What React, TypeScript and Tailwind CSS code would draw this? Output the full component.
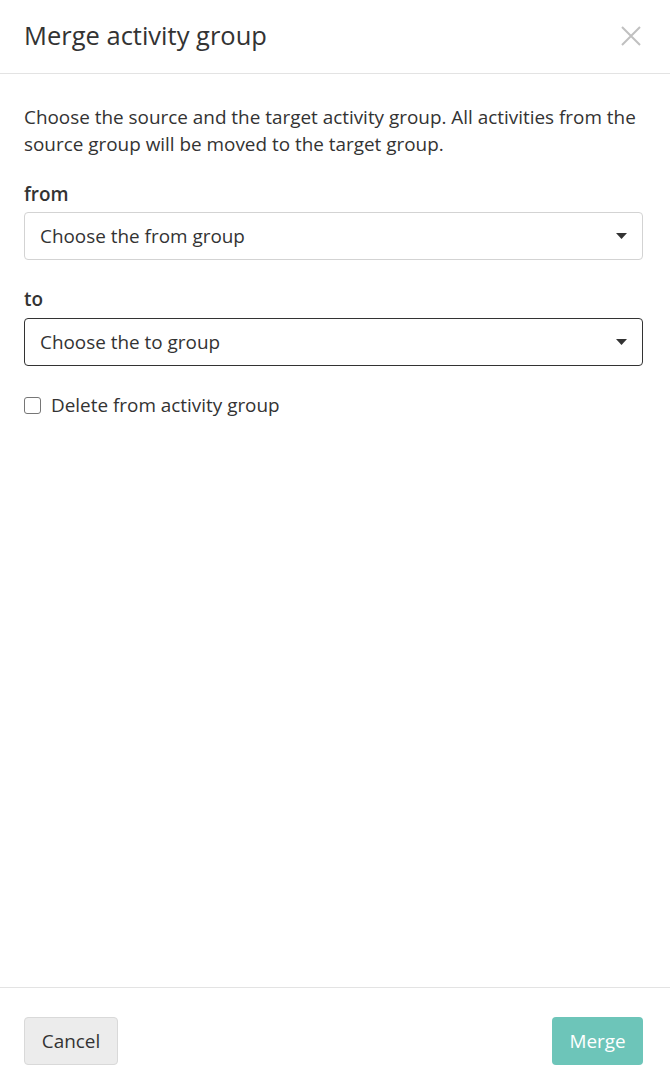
export default function App() {
  return (
    <div className="flex h-[1091px] w-full flex-col bg-white text-[#333] [font-family:'Open_Sans',sans-serif]">
      <header className="flex h-[74px] shrink-0 items-center justify-between border-b border-[#e3e3e3] pb-[2px] pl-6 pr-[29px]">
        <h1 className="text-[25.5px] leading-none">Merge activity group</h1>
        <button type="button" className="text-[#c0c0c0]" aria-label="Close">
          <svg width="20" height="20" viewBox="0 0 20 20" fill="none" stroke="currentColor" strokeWidth="2">
            <path d="M1 1l18 18M19 1L1 19" />
          </svg>
        </button>
      </header>

      <main className="flex-1 pl-6 pr-[27px] pt-[30px]">
        <p className="text-[18.9px] leading-[27px]">
          Choose the source and the target activity group. All activities from the source group will be moved to the target group.
        </p>

        <label className="mt-[23px] mb-[4px] block text-[18.9px] font-semibold leading-[27px]">from</label>
        <div className="flex h-12 items-center justify-between rounded border border-[#d3d3d3] pl-[15px] pr-[15px] text-[18.9px]">
          <span>Choose the from group</span>
          <svg width="11" height="6" viewBox="0 0 11 6" fill="#333">
            <path d="M0 0h11L5.5 6z" />
          </svg>
        </div>

        <label className="mt-[26px] mb-[5px] block text-[18.9px] font-semibold leading-[27px]">to</label>
        <div className="flex h-12 items-center justify-between rounded border border-[#333] pl-[15px] pr-[15px] text-[18.9px]">
          <span>Choose the to group</span>
          <svg width="11" height="6" viewBox="0 0 11 6" fill="#333">
            <path d="M0 0h11L5.5 6z" />
          </svg>
        </div>

        <label className="mt-[26px] flex items-center gap-[10px] text-[18.9px] leading-[27px]">
          <span className="h-[17px] w-[17px] rounded-[3px] border border-[#767676] bg-white" />
          <span>Delete from activity group</span>
        </label>
      </main>

      <footer className="flex h-[104px] shrink-0 items-start justify-between border-t border-[#e3e3e3] pl-6 pr-[27px] pt-[29px]">
        <button type="button" className="h-12 w-[94px] rounded border border-[#d9d9d9] bg-[#ececec] text-[18.9px] text-[#333]">
          Cancel
        </button>
        <button type="button" className="h-12 w-[91px] rounded bg-[#6dc5b9] text-[18.9px] text-white">
          Merge
        </button>
      </footer>
    </div>
  )
}
